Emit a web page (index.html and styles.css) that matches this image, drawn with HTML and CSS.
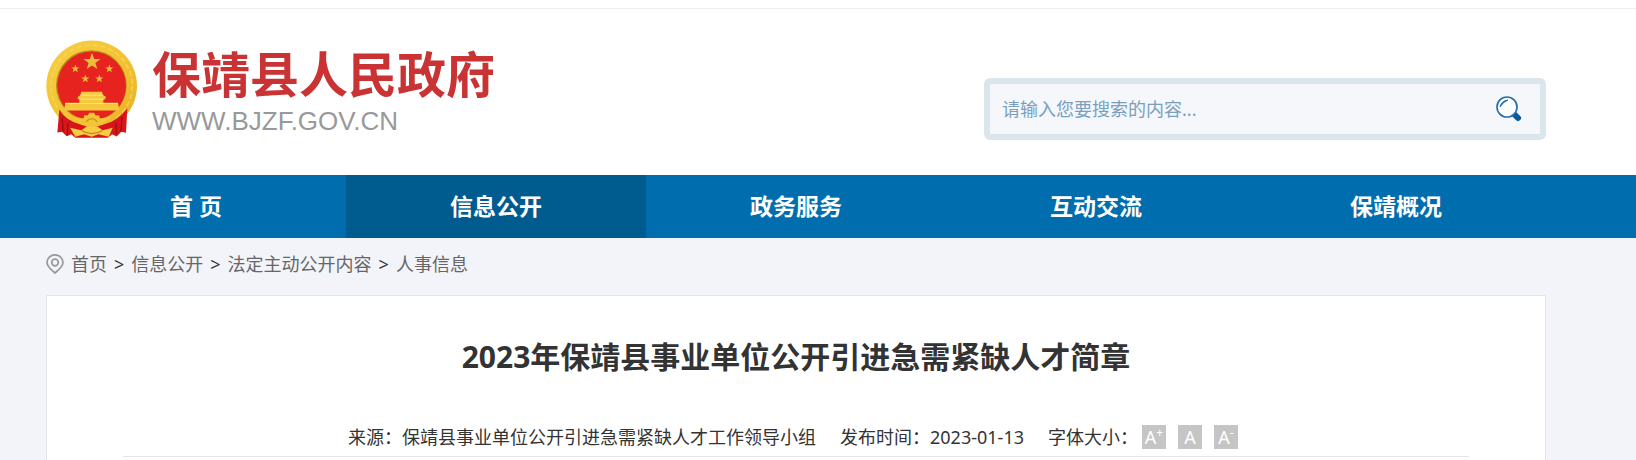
FILE: index.html
```html
<!DOCTYPE html>
<html lang="zh-CN">
<head>
    <meta charset="UTF-8">
    <meta name="viewport" content="width=device-width, initial-scale=1.0">
    <title>2023年保靖县事业单位公开引进急需紧缺人才简章</title>
    <link rel="stylesheet" href="styles.css">
</head>
<body>
    <header class="header">
        <div class="container header-inner">
            <a class="logo" href="#">
                <svg class="emblem" viewBox="48 44 276 296" aria-hidden="true">
                    <defs>
                        <linearGradient id="gold" x1="0" y1="0" x2="1" y2="1">
                            <stop offset="0" stop-color="#f6cf45"/>
                            <stop offset="0.5" stop-color="#f3c434"/>
                            <stop offset="1" stop-color="#e9ae24"/>
                        </linearGradient>
                        <path id="star" d="M0-10 2.4-3.1 9.5-3.1 3.8 1.2 5.9 8.1 0 4 -5.9 8.1 -3.8 1.2 -9.5-3.1 -2.4-3.1z"/>
                    </defs>
                    <!-- 麦稻穗圈 -->
                    <circle cx="185" cy="181" r="136" fill="url(#gold)"/>
                    <circle cx="185" cy="181" r="122" fill="none" stroke="#f9dc66" stroke-width="5" stroke-dasharray="16 8" opacity="0.6"/>
                    <circle cx="184" cy="180" r="106" fill="#b98a1c"/>
                    <circle cx="185" cy="181" r="103" fill="#e6231e"/>
                    <g fill="#e9bd3a">
                        <use href="#star" transform="translate(186 109) scale(2.7)"/>
                        <use href="#star" transform="translate(136 130) scale(1.3)"/>
                        <use href="#star" transform="translate(238 130) scale(1.3)"/>
                        <use href="#star" transform="translate(166 160) scale(1.3)"/>
                        <use href="#star" transform="translate(208 160) scale(1.3)"/>
                    </g>
                    <!-- 天安门 -->
                    <path d="M154 199 H216 L219 209 L228 214 L226 220 H220 V232 H264 L268 255 H102 L106 232 H148 V220 H142 L144 214 L151 209z" fill="#f6c93c"/>
                    <path d="M150 209 H220 M146 221 H224 M106 234 H264" stroke="#fae58a" stroke-width="3"/>
                    <!-- 红绶 -->
                    <path d="M88 252 Q108 286 154 298 L170 303 H202 L218 298 Q264 286 292 248 L288 322 L274 319 L260 333 L246 326 L234 337 H136 L124 326 L110 332 L96 319 L82 321z" fill="#d8161a"/>
                    <path d="M97 276 L99 318 M114 292 L112 330 M276 274 L273 318 M258 292 L259 328" stroke="#9e0f12" stroke-width="4" fill="none"/>
                    <!-- 齿轮 -->
                    <path d="M128 274 L160 279 L163 269 L173 270 L178 262 H192 L197 270 L207 269 L210 279 L244 274 Q226 296 204 300 L185 306 L166 300 Q144 296 128 274z" fill="#f3c434"/>
                    <path d="M168 289 Q185 270 202 289" stroke="#cf9321" stroke-width="4" fill="none"/>
                    <path d="M120 307 L154 314 L171 302 H201 L218 314 L248 307 L236 334 L205 326 L185 334 L162 326 L136 334z" fill="#f5cd43"/>
                    <path d="M155 315 Q185 334 218 315" stroke="#cf7e1c" stroke-width="4" fill="none"/>
                </svg>
                <span class="logo-text">
                    <span class="logo-name">保靖县人民政府</span>
                    <span class="logo-url">WWW.BJZF.GOV.CN</span>
                </span>
            </a>

            <form class="search" role="search">
                <input class="search-input" type="text" placeholder="请输入您要搜索的内容..." aria-label="搜索">
                <button class="search-btn" type="button" aria-label="搜索">
                    <svg viewBox="0 0 26 26" aria-hidden="true">
                        <path d="M17 17 L22 22" stroke="#075a9c" stroke-width="6" stroke-linecap="round"/>
                        <circle cx="11" cy="11" r="10" fill="#fff" stroke="#2870aa" stroke-width="1.7"/>
                        <path d="M4 11 Q5 5 12 4 Q7 6 4 11z" fill="#2870aa" stroke="#2870aa"/>
                    </svg>
                </button>
            </form>
        </div>
    </header>

    <nav class="nav">
        <div class="container nav-inner">
            <a href="#">首 页</a>
            <a class="active" href="#">信息公开</a>
            <a href="#">政务服务</a>
            <a href="#">互动交流</a>
            <a href="#">保靖概况</a>
        </div>
    </nav>

    <main class="container">
        <div class="crumbs">
            <svg class="pin" viewBox="0 0 18 20" aria-hidden="true">
                <path d="M9 19 Q1 12.500 1 8.500 A8 7.700 0 0 1 17 8.500 Q17 12.500 9 19z" fill="none" stroke="#999" stroke-width="1.7"/>
                <circle cx="9" cy="8.500" r="3.300" fill="none" stroke="#999" stroke-width="1.7"/>
            </svg>
            <a href="#">首页</a>
            <span>&gt;</span>
            <a href="#">信息公开</a>
            <span>&gt;</span>
            <a href="#">法定主动公开内容</a>
            <span>&gt;</span>
            <a href="#">人事信息</a>
        </div>

        <article class="article">
            <h1>2023年保靖县事业单位公开引进急需紧缺人才简章</h1>
            <div class="meta">
                <span>来源：保靖县事业单位公开引进急需紧缺人才工作领导小组</span>
                <span>发布时间：2023-01-13</span>
                <div class="font-size">
                    <span>字体大小：</span>
                    <button type="button" aria-label="放大字体">A<sup>+</sup></button>
                    <button type="button" aria-label="默认字体">A</button>
                    <button type="button" aria-label="缩小字体">A<sup>-</sup></button>
                </div>
            </div>
        </article>
    </main>
</body>
</html>
```
FILE: styles.css
```css
* {
    margin: 0;
    padding: 0;
    box-sizing: border-box;
}

body {
    font-family: "Noto Sans", "Noto Sans CJK SC", sans-serif;
    font-size: 18px;
    line-height: 24px;
    color: #333;
    background: #f3f4f9;
}

a {
    color: inherit;
    text-decoration: none;
}

.container {
    padding: 0 90px 0 46px;
}

.header {
    background: #fff;
    padding-top: 8px;
}

.header-inner {
    display: flex;
    align-items: flex-start;
    justify-content: space-between;
    border-top: 1px solid #eee;
    min-height: 167px;
}

.logo {
    display: flex;
    gap: 14px;
    padding-top: 31px;
}

.emblem {
    width: 92px;
    height: 99px;
}

.logo-text {
    display: flex;
    flex-direction: column;
    padding-top: 5px;
    white-space: nowrap;
}

.logo-name {
    font-family: "Noto Sans CJK SC", sans-serif;
    font-size: 49px;
    font-weight: bold;
    line-height: 54px;
    color: #c93333;
}

.logo-url {
    font-family: "Liberation Sans", Arial, sans-serif;
    font-size: 26px;
    line-height: 24px;
    padding-top: 10px;
    color: #999;
}

.search {
    display: flex;
    align-items: center;
    width: 562px;
    height: 62px;
    margin-top: 69px;
    border: 6px solid #dbe6ec;
    border-radius: 6px;
    background: #f5f7fa;
}

.search-input {
    flex: 1;
    min-width: 0;
    height: 100%;
    padding: 0 12px;
    border: none;
    outline: none;
    background: none;
    font: inherit;
    color: #333;
}

.search-input::placeholder {
    color: #7a9fbf;
    opacity: 1;
}

.search-btn {
    width: 26px;
    height: 26px;
    margin-right: 18px;
    border: none;
    background: none;
    cursor: pointer;
}

.search-btn svg {
    display: block;
    width: 26px;
    height: 26px;
}

.nav {
    background: #006eae;
}

.nav-inner {
    display: flex;
}

.nav a {
    flex: 1;
    font-size: 23px;
    font-weight: bold;
    line-height: 63px;
    text-align: center;
    color: #fff;
}

.nav a.active {
    background: #005c8f;
}

.crumbs {
    display: flex;
    align-items: center;
    gap: 7px;
    height: 57px;
    padding-bottom: 5px;
    color: #666;
}

.crumbs span {
    color: #333;
}

.pin {
    width: 18px;
    height: 20px;
}

.article {
    min-height: 165px;
    padding: 0 76px;
    border: 1px solid #e5e5e5;
    border-bottom: none;
    background: #fff;
}

.article h1 {
    padding: 41px 0 43px;
    font-size: 30px;
    line-height: 40px;
    text-align: center;
}

.meta {
    display: flex;
    justify-content: center;
    gap: 24px;
    padding: 5px 6px 7px 0;
    border-bottom: 1px solid #e5e5e5;
    white-space: nowrap;
}

.font-size {
    display: flex;
    gap: 12px;
}

.font-size span {
    margin-right: -8px;
}

.font-size button {
    width: 24px;
    height: 24px;
    border: none;
    background: #c5c5c5;
    font-family: "Noto Sans", sans-serif;
    font-size: 18px;
    line-height: 24px;
    color: #fff;
    cursor: pointer;
}

.font-size sup {
    font-size: 12px;
    line-height: 0;
}
```
